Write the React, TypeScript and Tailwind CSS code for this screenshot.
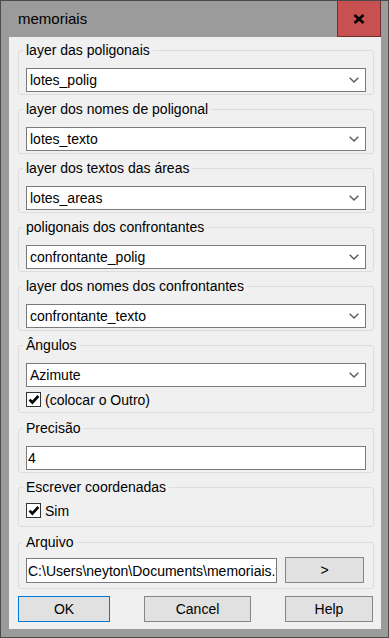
import React from 'react';

const font = { fontFamily: '"Liberation Sans", Arial, sans-serif' };

function Chevron() {
    return (
        <svg width="10" height="6" viewBox="0 0 10 6" className="shrink-0">
            <path d="M0.7 0.7 L5 5 L9.3 0.7" fill="none" stroke="#5a5a5a" strokeWidth="1.4"/>
        </svg>
    );
}

function Combo({ value }: { value: string }) {
    return (
        <div className="flex h-[24px] w-[340px] items-center justify-between border border-[#7a7a7a] bg-white pl-[3px] pr-[6px]">
            <span className="leading-[16px]">{value}</span>
            <Chevron/>
        </div>
    );
}

function Check({ label }: { label: string }) {
    return (
        <div className="flex h-[15px] items-center gap-[4px]">
            <div className="flex h-[15px] w-[15px] items-center justify-center border border-[#333] bg-white">
                <svg width="12" height="11" viewBox="0 0 12 11">
                    <path d="M1.5 5.6 L4.4 8.5 L10.4 2" fill="none" stroke="#000" strokeWidth="2.6"/>
                </svg>
            </div>
            <span className="leading-[16px]">{label}</span>
        </div>
    );
}

function Group({ title, className, children }: { title: string; className: string; children: React.ReactNode }) {
    return (
        <fieldset className={`rounded-[3px] border border-[#dcdcdc] px-[7px] ${className}`}>
            <legend className="-ml-[3px] px-[3px] leading-[16px]">{title}</legend>
            {children}
        </fieldset>
    );
}

export default function App() {
    const layers = [
        ['layer das poligonais', 'lotes_polig'],
        ['layer dos nomes de poligonal', 'lotes_texto'],
        ['layer dos textos das áreas', 'lotes_areas'],
        ['poligonais dos confrontantes', 'confrontante_polig'],
        ['layer dos nomes dos confrontantes', 'confrontante_texto'],
    ];

    return (
        <div style={font} className="flex h-[638px] w-[389px] flex-col border border-[#4b4b4b] bg-[#9b9b9b] text-[14px] text-black">
            <div className="flex h-[36px] shrink-0 items-center justify-between pr-[7px]">
                <span className="pl-[17px] text-[15px]">memoriais</span>
                <div className="flex h-[36px] w-[44px] items-center justify-center border-x border-b border-[#6e3030] bg-[#c75050]">
                    <svg width="12" height="10" viewBox="0 0 12 10">
                        <path d="M1.5 1 L10.5 9 M10.5 1 L1.5 9" stroke="#000" strokeWidth="2.6"/>
                    </svg>
                </div>
            </div>

            <div className="ml-[8px] mr-[7px] flex h-[592px] flex-col bg-[#f0f0f0] pl-[9px] pr-[7px] pt-[5px]">
                {layers.map(([title, value], i) => (
                    <Group key={title} title={title} className={`pb-[2px] pt-[10px] ${i > 0 ? 'mt-[6px]' : ''}`}>
                        <Combo value={value}/>
                    </Group>
                ))}

                <Group title="Ângulos" className="mt-[6px] pb-[5px] pt-[10px]">
                    <Combo value="Azimute"/>
                    <div className="mt-[5px]">
                        <Check label="(colocar o Outro)"/>
                    </div>
                </Group>

                <Group title="Precisão" className="mt-[7px] pb-[2px] pt-[10px]">
                    <div className="flex h-[24px] w-[340px] items-center border border-[#7a7a7a] bg-white pl-[1px]">
                        <span className="leading-[16px]">4</span>
                    </div>
                </Group>

                <Group title="Escrever coordenadas" className="mt-[6px] pb-[8px] pt-[8px]">
                    <Check label="Sim"/>
                </Group>

                <Group title="Arquivo" className="mt-[7px] pb-[5px] pt-[7px]">
                    <div className="flex items-start gap-[8px]">
                        <div className="mt-[1px] flex h-[25px] w-[251px] items-center overflow-hidden whitespace-nowrap border border-[#7a7a7a] bg-white pl-[1px]">
                            <span className="leading-[16px]">C:\Users\neyton\Documents\memoriais.txt</span>
                        </div>
                        <button className="h-[26px] w-[79px] border border-[#858585] bg-[#e1e1e1]">&gt;</button>
                    </div>
                </Group>

                <div className="mt-[7px] flex gap-[34px]">
                    <button className="h-[26px] w-[92px] border border-[#0078d7] bg-[#e1e1e1]">OK</button>
                    <button className="h-[26px] w-[107px] border border-[#858585] bg-[#e1e1e1]">Cancel</button>
                    <button className="h-[26px] w-[88px] border border-[#858585] bg-[#e1e1e1]">Help</button>
                </div>
            </div>
        </div>
    );
}
